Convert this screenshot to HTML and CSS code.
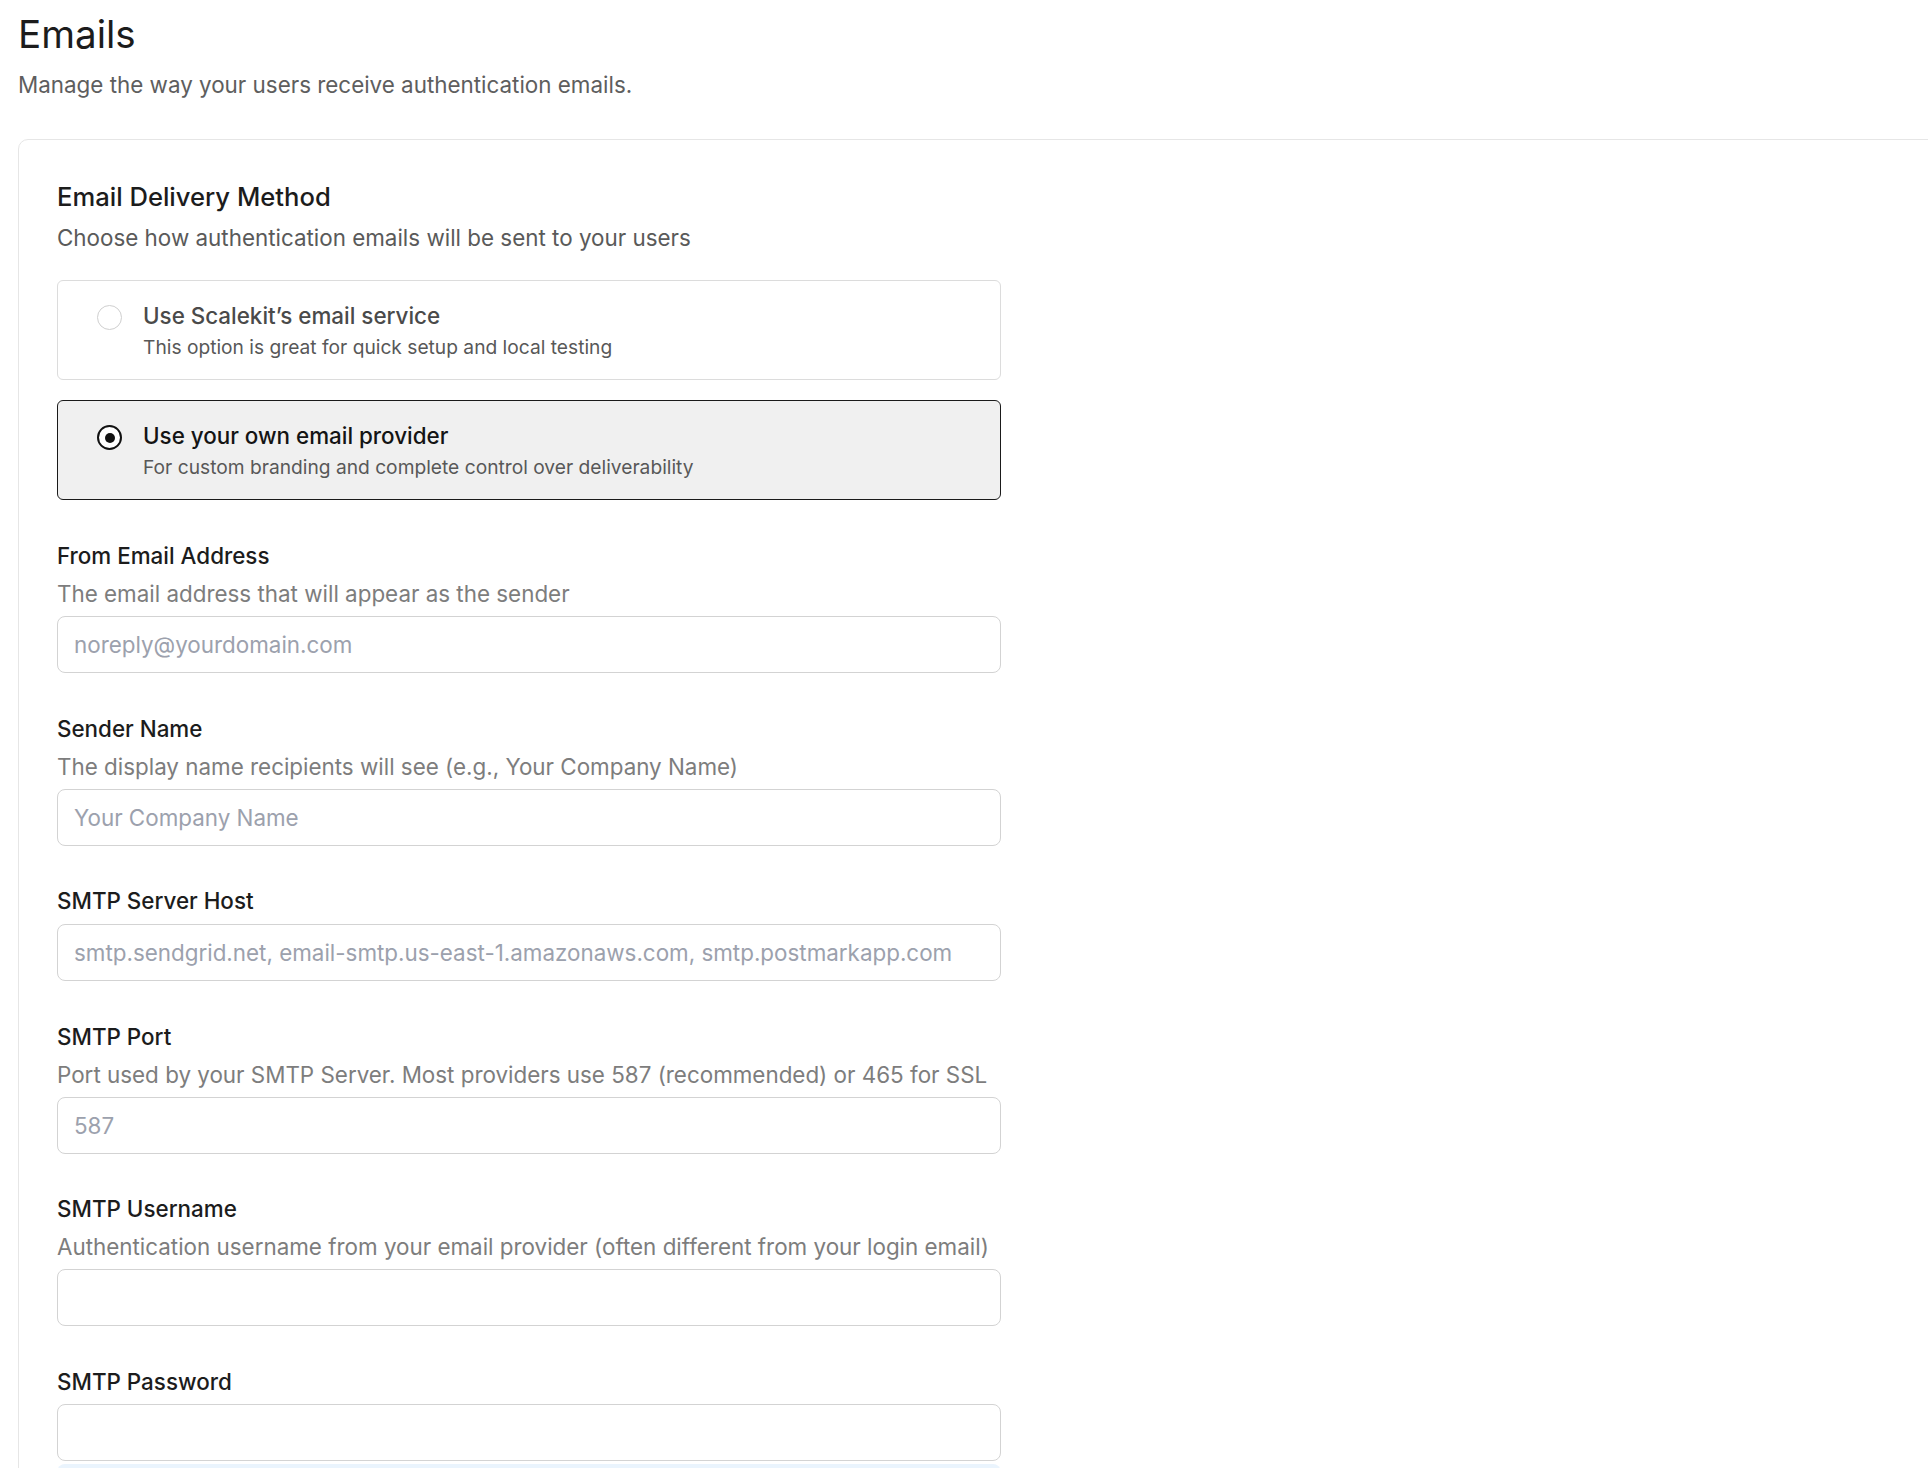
FILE: index.html
```html
<!DOCTYPE html>
<html lang="en">
<head>
<meta charset="utf-8">
<title>Emails</title>
<link rel="stylesheet" href="styles.css">
</head>
<body>
<main class="page">
  <header class="page-header">
    <h1 class="page-title">Emails</h1>
    <p class="page-subtitle">Manage the way your users receive authentication emails.</p>
  </header>

  <section class="card">
    <h2 class="section-title">Email Delivery Method</h2>
    <p class="section-desc">Choose how authentication emails will be sent to your users</p>

    <div class="options">
      <label class="option">
        <span class="radio"></span>
        <span class="option-text">
          <span class="option-title">Use Scalekit’s email service</span>
          <span class="option-desc">This option is great for quick setup and local testing</span>
        </span>
      </label>
      <label class="option option-selected">
        <span class="radio radio-checked"></span>
        <span class="option-text">
          <span class="option-title">Use your own email provider</span>
          <span class="option-desc">For custom branding and complete control over deliverability</span>
        </span>
      </label>
    </div>

    <div class="fields">
      <div class="field">
        <div class="field-label">From Email Address</div>
        <div class="field-desc">The email address that will appear as the sender</div>
        <input class="field-input" type="text" placeholder="noreply@yourdomain.com">
      </div>
      <div class="field">
        <div class="field-label">Sender Name</div>
        <div class="field-desc">The display name recipients will see (e.g., Your Company Name)</div>
        <input class="field-input" type="text" placeholder="Your Company Name">
      </div>
      <div class="field">
        <div class="field-label">SMTP Server Host</div>
        <input class="field-input field-input-nodesc" type="text" placeholder="smtp.sendgrid.net, email-smtp.us-east-1.amazonaws.com, smtp.postmarkapp.com">
      </div>
      <div class="field">
        <div class="field-label">SMTP Port</div>
        <div class="field-desc">Port used by your SMTP Server. Most providers use 587 (recommended) or 465 for SSL</div>
        <input class="field-input" type="text" placeholder="587">
      </div>
      <div class="field">
        <div class="field-label">SMTP Username</div>
        <div class="field-desc">Authentication username from your email provider (often different from your login email)</div>
        <input class="field-input" type="text">
      </div>
      <div class="field">
        <div class="field-label">SMTP Password</div>
        <input class="field-input" type="password">
        <div class="field-note"></div>
      </div>
    </div>
  </section>
</main>
</body>
</html>
```

FILE: styles.css
```css
html {
  overflow: hidden;
}

body {
  margin: 0;
  background: #ffffff;
  font-family: Inter, "Noto Sans", "Liberation Sans", sans-serif;
  color: #1a1a1a;
}

.page {
  padding: 11px 0 0 18px;
}

.page-title {
  margin: 0;
  font-size: 38.6px;
  line-height: 46px;
  font-weight: 400;
  color: #1c1c1c;
}

.page-subtitle {
  margin: 14px 0 0 0;
  font-size: 22.4px;
  line-height: 28px;
  color: #5e5e5e;
}

.card {
  margin-top: 40px;
  width: calc(100% + 80px);
  border: 1px solid #e6e6e6;
  border-radius: 10px;
  padding: 41px 38px 60px 38px;
  box-sizing: border-box;
}

.section-title {
  margin: 0;
  font-size: 25.6px;
  line-height: 32px;
  font-weight: 500;
  color: #1c1c1c;
}

.section-desc {
  margin: 11px 0 0 0;
  font-size: 22.4px;
  line-height: 28px;
  color: #5a5a5a;
}

.options {
  margin-top: 28px;
  width: 944px;
  display: flex;
  flex-direction: column;
  gap: 20px;
}

.option {
  display: flex;
  align-items: flex-start;
  gap: 21px;
  height: 100px;
  box-sizing: border-box;
  padding: 21px 38px 0 39px;
  border: 1px solid #dcdcdc;
  border-radius: 6px;
  background: #ffffff;
}

.option-selected {
  background: #f0f0f0;
  border-color: #1a1a1a;
}

.radio {
  flex: none;
  width: 25px;
  height: 25px;
  margin-top: 3px;
  box-sizing: border-box;
  border: 1px solid #cfcfcf;
  border-radius: 50%;
  background: #ffffff;
  display: flex;
  align-items: center;
  justify-content: center;
}

.radio-checked {
  border: 2.5px solid #111111;
}

.radio-checked::after {
  content: "";
  width: 10px;
  height: 10px;
  border-radius: 50%;
  background: #111111;
}

.option-text {
  display: flex;
  flex-direction: column;
  gap: 5px;
}

.option-title {
  font-size: 22.4px;
  line-height: 28px;
  font-weight: 500;
  color: #4a4a4a;
}

.option-selected .option-title {
  color: #141414;
}

.option-desc {
  font-size: 19.2px;
  line-height: 24px;
  color: #585858;
}

.fields {
  margin-top: 42px;
  width: 944px;
  display: flex;
  flex-direction: column;
  gap: 41.5px;
}

.field {
  display: flex;
  flex-direction: column;
}

.field-label {
  font-size: 22.4px;
  line-height: 28px;
  font-weight: 500;
  color: #1c1c1c;
}

.field-desc {
  margin-top: 10px;
  font-size: 22.4px;
  line-height: 28px;
  color: #7d7d7d;
}

.field-input {
  margin-top: 8px;
  height: 57px;
  box-sizing: border-box;
  width: 100%;
  border: 1px solid #d3d3d3;
  border-radius: 8px;
  padding: 0 16px;
  font-family: Inter, "Noto Sans", "Liberation Sans", sans-serif;
  font-size: 22.4px;
  color: #1a1a1a;
  background: #ffffff;
  outline: none;
}

.field-input-nodesc {
  margin-top: 9px;
}

.field-input::placeholder {
  color: #9ca1ad;
}

.field-note {
  margin-top: 3px;
  height: 80px;
  border-radius: 8px;
  background: #eaf4fd;
}
```
